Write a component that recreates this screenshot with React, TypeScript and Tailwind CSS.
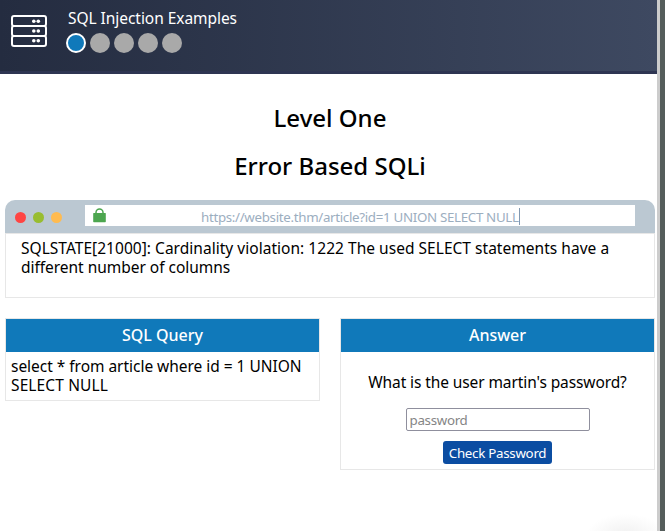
import type { ReactNode } from "react";

function ServerIcon() {
  return (
    <svg width="36" height="33" viewBox="0 0 36 33" fill="none" stroke="white" strokeWidth="2" className="shrink-0">
      <rect x="1" y="2" width="34" height="10" rx="2" />
      <rect x="1" y="12" width="34" height="10" rx="2" />
      <rect x="1" y="22" width="34" height="10" rx="2" />
      <g fill="white" stroke="none">
        <circle cx="22.8" cy="7.2" r="1.8" /><circle cx="27.3" cy="7.2" r="1.8" />
        <circle cx="22.8" cy="17" r="1.8" /><circle cx="27.3" cy="17" r="1.8" />
        <circle cx="22.8" cy="26.8" r="1.8" /><circle cx="27.3" cy="26.8" r="1.8" />
      </g>
    </svg>
  );
}

function LockIcon() {
  return (
    <svg width="13" height="15" viewBox="0 0 13 15" className="-mt-px shrink-0">
      <path d="M3 6V4.4a3.5 3.4 0 0 1 7 0V6" fill="none" stroke="#4ca64f" strokeWidth="1.5" />
      <rect x="0.2" y="5" width="12.6" height="9.2" rx="0.6" fill="#4ca64f" />
    </svg>
  );
}

function Header() {
  return (
    <header className="flex h-[74px] border-b-[3px] border-[#2e3552] bg-linear-to-r from-[#242c40] to-[#3e4961] pl-[11px]">
      <div className="pt-[14px]"><ServerIcon /></div>
      <div className="pl-[19px] pt-2">
        <div className="h-5 whitespace-nowrap pl-[2px] text-[15.5px] leading-5 tracking-[-0.05px] text-white">SQL Injection Examples</div>
        <div className="mt-[5px] flex gap-1">
          <span className="size-5 rounded-full border-2 border-white bg-[#1079ba]" />
          {[2, 3, 4, 5].map((n) => (
            <span key={n} className="size-5 rounded-full bg-[#a9a9a9]" />
          ))}
        </div>
      </div>
    </header>
  );
}

function Panel({ title, children }: { title: string; children: ReactNode }) {
  return (
    <section className="w-[315px] border border-[#e7e7e7]">
      <h3 className="h-[33px] bg-[#1079ba] text-center text-[16px] font-medium leading-8 text-white">{title}</h3>
      {children}
    </section>
  );
}

export default function App() {
  return (
    <div className="flex h-[531px] w-[665px] overflow-hidden bg-white font-['Noto_Sans',sans-serif] text-black">
      <div className="w-[657px] bg-[radial-gradient(ellipse_40px_22px_at_626px_536px,#f0f0f0,#ffffff)]">
        <Header />
        <main className="pl-[5px]">
          <div className="w-[650px] pt-[30px] text-center text-[24px] font-medium leading-7">
            <h1>Level One</h1>
            <h2 className="mt-5">Error Based SQLi</h2>
          </div>
          <section className="mt-5 w-[650px]">
            <div className="flex h-[33px] rounded-t-[10px] bg-[#bbc8d2] pl-[10px] pt-[5px]">
              <div className="flex w-[70px] gap-[7px] pt-[7px]">
                <span className="size-[11px] rounded-full bg-[#ff4543]" />
                <span className="size-[11px] rounded-full bg-[#98bd30]" />
                <span className="size-[11px] rounded-full bg-[#ffbb50]" />
              </div>
              <div className="flex h-[21px] w-[550px] bg-white pl-2 pt-1">
                <LockIcon />
                <div className="ml-[95px] h-4 whitespace-nowrap text-[13.33px] leading-4 tracking-[-0.32px] text-[#9caebf]">https://website.thm/article?id=1 UNION SELECT NULL</div>
                <span className="-mt-px h-[17px] w-px bg-[#8298b0]" />
              </div>
            </div>
            <div className="h-[65px] border border-[#e7e7e7] pl-[15px] pt-[5px] text-[15.5px] leading-[19px]">
              <p className="whitespace-nowrap tracking-[0.03px]">SQLSTATE[21000]: Cardinality violation: 1222 The used SELECT statements have a</p>
              <p className="whitespace-nowrap tracking-[-0.03px]">different number of columns</p>
            </div>
          </section>
          <div className="mt-5 flex items-start gap-5">
            <Panel title="SQL Query">
              <div className="h-12 whitespace-nowrap pl-[5px] pt-[5px] text-[15.5px] leading-[19px]">
                <p className="tracking-[-0.03px]">select * from article where id = 1 UNION</p>
                <p className="tracking-[0.12px]">SELECT NULL</p>
              </div>
            </Panel>
            <Panel title="Answer">
              <div className="flex h-[117px] flex-col items-center pt-5">
                <p className="h-5 whitespace-nowrap text-[15.5px] leading-5 tracking-[-0.1px]">What is the user martin's password?</p>
                <input placeholder="password" className="mt-4 h-[23px] w-[184px] rounded-[2px] border border-[#8f8f9d] px-[3px] text-[13.33px] tracking-[-0.3px] placeholder:text-[#858585]" />
                <button className="mt-[10px] h-[23px] w-[109px] whitespace-nowrap rounded-[3px] bg-[#0b4da2] text-[13.33px] leading-[24px] tracking-[-0.28px] text-white">Check Password</button>
              </div>
            </Panel>
          </div>
        </main>
      </div>
      <div className="w-[3px] bg-[#cccccc]" />
      <div className="w-[5px] bg-[#555d5b]" />
    </div>
  );
}
